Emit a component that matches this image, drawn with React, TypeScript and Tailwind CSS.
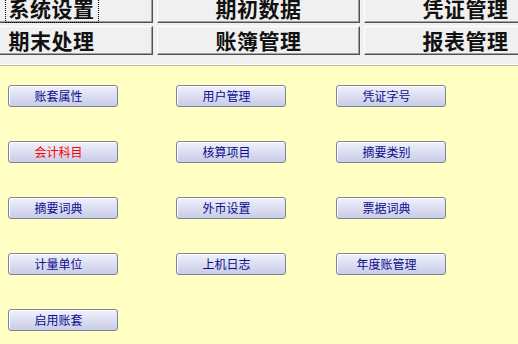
import React from 'react';

const tabRows = [
  ['系统设置', '期初数据', '凭证管理'],
  ['期末处理', '账簿管理', '报表管理'],
];

const buttons: { label: string; red?: boolean }[][] = [
  [{ label: '账套属性' }, { label: '用户管理' }, { label: '凭证字号' }],
  [{ label: '会计科目', red: true }, { label: '核算项目' }, { label: '摘要类别' }],
  [{ label: '摘要词典' }, { label: '外币设置' }, { label: '票据词典' }],
  [{ label: '计量单位' }, { label: '上机日志' }, { label: '年度账管理' }],
  [{ label: '启用账套' }],
];

function Tab({ label, focused }: { label: string; focused?: boolean }) {
  return (
    <div className="w-[203px] h-[29px] shrink-0 border border-t-white border-l-white border-r-[#505050] border-b-[#505050] bg-[#f0f0f0] shadow-[inset_-1px_-1px_0_#a0a0a0] flex items-center justify-center">
      <span
        className={`text-[21px] leading-none font-bold text-[#111] tracking-[0.5px] ${
          focused ? 'outline outline-1 outline-dotted outline-black outline-offset-[3px]' : ''
        }`}
      >
        {label}
      </span>
    </div>
  );
}

function FuncButton({ label, red }: { label: string; red?: boolean }) {
  return (
    <button
      type="button"
      className="w-[110px] h-[22px] rounded-[3px] border border-[#7c8098] bg-gradient-to-b from-[#f0f1fb] via-[#dcdff2] to-[#c8cce6] shadow-[inset_1px_1px_0_#ffffff] flex items-center justify-center pr-[9px]"
    >
      <span className={`text-[12px] leading-none ${red ? 'text-[#ff0000]' : 'text-[#0c0c8e]'}`}>{label}</span>
    </button>
  );
}

export default function App() {
  return (
    <div
      className="w-[518px] h-[344px] overflow-hidden bg-[#ffffc4] flex flex-col"
      style={{ fontFamily: '"Noto Sans CJK SC", "Noto Sans", sans-serif' }}
    >
      {/* tab strip, scrolled so the first column is partly hidden */}
      <div className="bg-[#f0f0f0] h-[66px] shrink-0 overflow-hidden border-b border-[#b8b890] flex flex-col">
        <div className="mt-[-6px] ml-[-50px] flex flex-col gap-[3px]">
          {tabRows.map((row, i) => (
            <div key={i} className="flex gap-[4px]">
              {row.map((t, j) => (
                <Tab key={t} label={t} focused={i === 0 && j === 0} />
              ))}
            </div>
          ))}
        </div>
        <div className="mt-auto h-px bg-white" />
      </div>
      <div className="pt-[19px] pl-[8px] flex flex-col gap-[34px]">
        {buttons.map((row, i) => (
          <div key={i} className="grid grid-cols-[168px_160px_110px]">
            {row.map((b) => (
              <FuncButton key={b.label} label={b.label} red={b.red} />
            ))}
          </div>
        ))}
      </div>
    </div>
  );
}
